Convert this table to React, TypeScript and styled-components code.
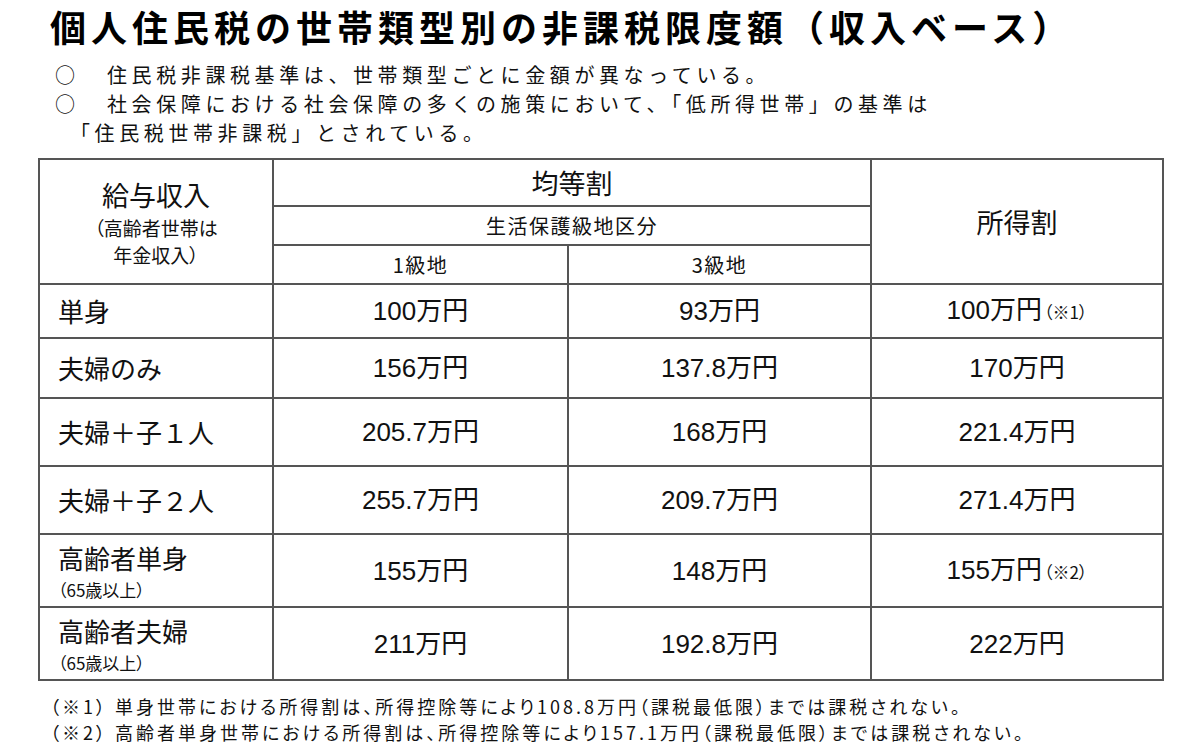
import styled, { createGlobalStyle } from "styled-components";

const GlobalStyle = createGlobalStyle`
  body {
    margin: 0;
    background: #fff;
    color: #111;
    font-family: "Noto Sans CJK JP", sans-serif;
  }
`;

type Row = {
  label: string;
  sub?: string;
  h: number;
  a: string;
  b: string;
  c: string;
  note?: string;
};

const rows: Row[] = [
  { label: "単身", h: 54, a: "100万円", b: "93万円", c: "100万円", note: "（※1）" },
  { label: "夫婦のみ", h: 60, a: "156万円", b: "137.8万円", c: "170万円" },
  { label: "夫婦＋子１人", h: 68, a: "205.7万円", b: "168万円", c: "221.4万円" },
  { label: "夫婦＋子２人", h: 68, a: "255.7万円", b: "209.7万円", c: "271.4万円" },
  { label: "高齢者単身", sub: "（65歳以上）", h: 73, a: "155万円", b: "148万円", c: "155万円", note: "（※2）" },
  { label: "高齢者夫婦", sub: "（65歳以上）", h: 73, a: "211万円", b: "192.8万円", c: "222万円" },
];

const App = () => {
  return (
    <>
      <GlobalStyle />
      <Page>
        <Title>個人住民税の世帯類型別の非課税限度額（収入ベース）</Title>
        <Notes>
          <Note>
            <Mark>○</Mark>住民税非課税基準は、世帯類型ごとに金額が異なっている。
          </Note>
          <Note>
            <Mark>○</Mark>社会保障における社会保障の多くの施策において、「低所得世帯」の基準は
            <br />
            「住民税世帯非課税」とされている。
          </Note>
        </Notes>

        <Table>
          <colgroup>
            <col style={{ width: 234 }} />
            <col style={{ width: 295 }} />
            <col style={{ width: 303 }} />
            <col style={{ width: 292 }} />
          </colgroup>
          <thead>
            <Tr $h={47}>
              <Head rowSpan={3}>
                <Big>給与収入</Big>
                <Small>（高齢者世帯は</Small>
                <Small>年金収入）</Small>
              </Head>
              <Head colSpan={2}>
                <Big>均等割</Big>
              </Head>
              <Head rowSpan={3}>
                <Big>所得割</Big>
              </Head>
            </Tr>
            <Tr $h={39}>
              <Head colSpan={2}>
                <Mid>生活保護級地区分</Mid>
              </Head>
            </Tr>
            <Tr $h={39}>
              <Head>
                <Mid>1級地</Mid>
              </Head>
              <Head>
                <Mid>3級地</Mid>
              </Head>
            </Tr>
          </thead>
          <tbody>
            {rows.map((r) => (
              <Tr key={r.label} $h={r.h}>
                <Label>
                  <LabelMain>{r.label}</LabelMain>
                  {r.sub && <LabelSub>{r.sub}</LabelSub>}
                </Label>
                <Value>{r.a}</Value>
                <Value>{r.b}</Value>
                <Value>
                  {r.c}
                  {r.note && <Ref>{r.note}</Ref>}
                </Value>
              </Tr>
            ))}
          </tbody>
        </Table>

        <Footnotes>
          <p>（※1） 単身世帯における所得割は、所得控除等により108.8万円（課税最低限）までは課税されない。</p>
          <p>（※2） 高齢者単身世帯における所得割は、所得控除等により157.1万円（課税最低限）までは課税されない。</p>
        </Footnotes>
      </Page>
    </>
  );
};

const Page = styled.main`
  width: 1200px;
  height: 744px;
  box-sizing: border-box;
  padding: 0 38px;
  overflow: hidden;
`;

const Title = styled.h1`
  margin: 0 0 0 12px;
  font-size: 36px;
  font-weight: 700;
  line-height: 52px;
  letter-spacing: 5px;
  white-space: nowrap;
  color: #000;
`;

const Notes = styled.ul`
  list-style: none;
  margin: 8px 0 0 17px;
  padding: 0;
  font-size: 20px;
  line-height: 29px;
  letter-spacing: 4.6px;
  white-space: nowrap;
`;

const Note = styled.li`
  padding-left: 15px;
  text-indent: -15px;
`;

const Mark = styled.span`
  display: inline-block;
  width: 52px;
  text-indent: 0;
  letter-spacing: 0;
`;

const Table = styled.table`
  margin-top: 11px;
  width: 1124px;
  border-collapse: collapse;
  table-layout: fixed;

  td,
  th {
    border: 2px solid #555;
    padding: 0;
  }
`;

const Tr = styled.tr<{ $h: number }>`
  height: ${(p) => p.$h}px;
`;

const Head = styled.th`
  font-weight: 400;
  text-align: center;
  vertical-align: middle;
`;

const Big = styled.div`
  font-size: 27px;
  line-height: 39px;
`;

const Mid = styled.div`
  font-size: 20px;
  line-height: 29px;
  letter-spacing: 1.5px;
`;

const Small = styled.div`
  font-size: 19px;
  line-height: 27.5px;
  font-feature-settings: "palt";
`;

const Label = styled.td`
  padding-left: 18px !important;
  vertical-align: middle;
`;

const LabelMain = styled.div`
  font-size: 26px;
  line-height: 38px;
`;

const LabelSub = styled.div`
  font-size: 17px;
  line-height: 25px;
  font-feature-settings: "palt";
`;

const Value = styled.td`
  text-align: center;
  vertical-align: middle;
  font-family: "Liberation Sans", "Noto Sans CJK JP", sans-serif;
  font-size: 26px;
  line-height: 38px;
`;

const Ref = styled.span`
  margin-left: 2px;
  font-family: "Noto Sans CJK JP", sans-serif;
  font-size: 17px;
  font-feature-settings: "palt";
`;

const Footnotes = styled.div`
  margin: 12px 0 0 12px;
  font-size: 18px;
  line-height: 26.2px;
  font-feature-settings: "palt";
  letter-spacing: 3px;
  white-space: nowrap;

  p {
    margin: 0;
  }
`;

export default App;
